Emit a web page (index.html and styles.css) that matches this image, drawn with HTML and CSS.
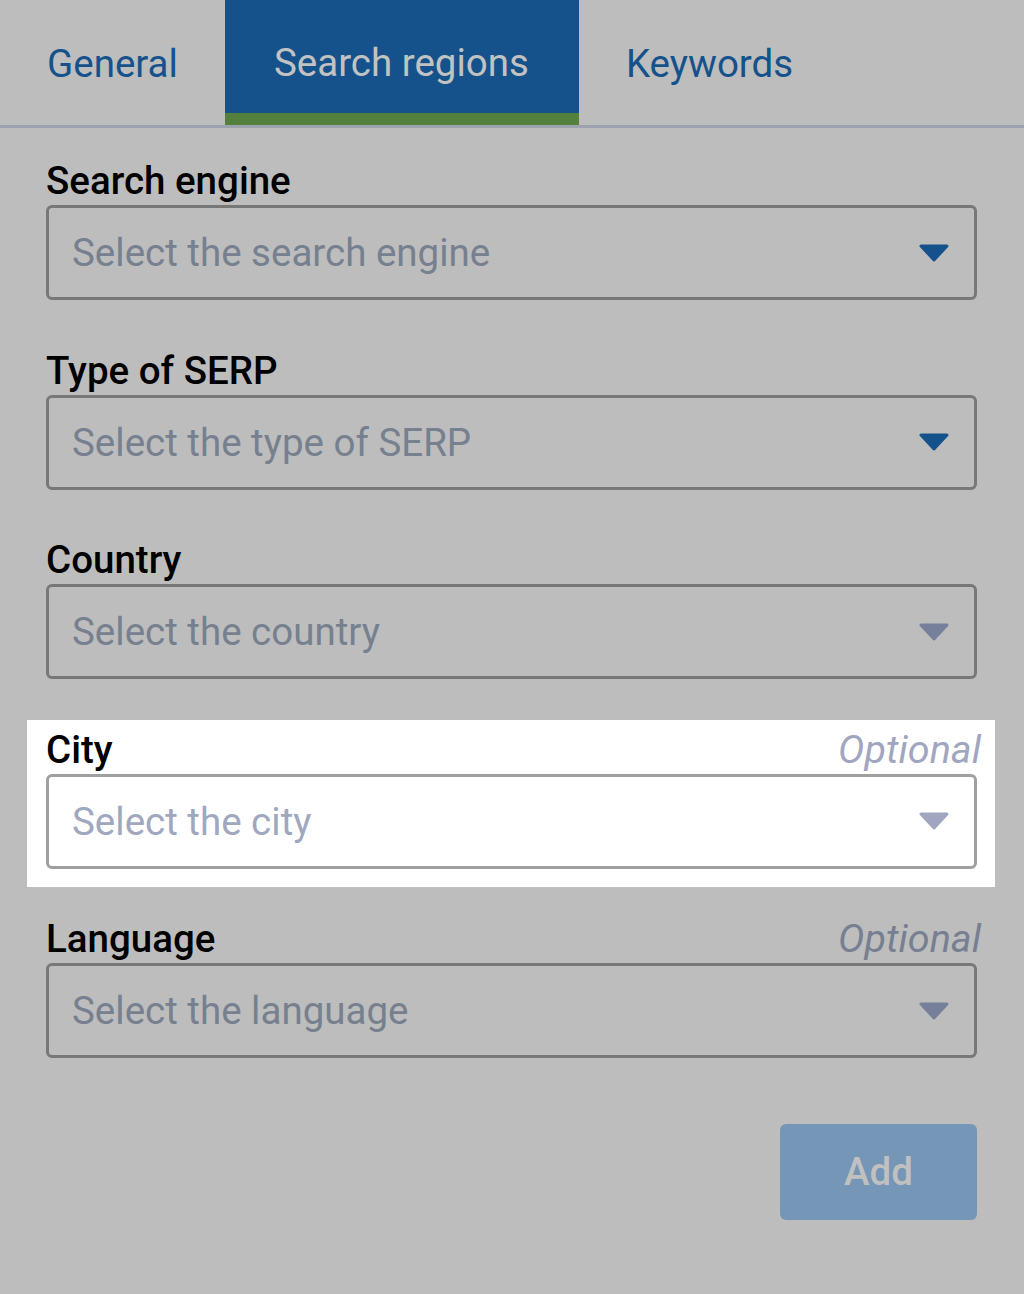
FILE: index.html
```html
<!DOCTYPE html>
<html lang="en">
<head>
<meta charset="utf-8">
<title>Search regions</title>
<link rel="stylesheet" href="styles.css">
</head>
<body>
<div class="page">
  <nav class="tabs">
    <div class="tab">General</div>
    <div class="tab tab-active">Search regions</div>
    <div class="tab">Keywords</div>
  </nav>
  <main class="form">
    <div class="field">
      <div class="label-row"><span class="label">Search engine</span></div>
      <div class="select">
        <span class="placeholder">Select the search engine</span>
        <svg class="arrow arrow-blue" width="30" height="18" viewBox="0 0 30 18"><polygon points="2,2 28,2 15,16" /></svg>
      </div>
    </div>
    <div class="field">
      <div class="label-row"><span class="label">Type of SERP</span></div>
      <div class="select">
        <span class="placeholder">Select the type of SERP</span>
        <svg class="arrow arrow-blue" width="30" height="18" viewBox="0 0 30 18"><polygon points="2,2 28,2 15,16" /></svg>
      </div>
    </div>
    <div class="field">
      <div class="label-row"><span class="label">Country</span></div>
      <div class="select">
        <span class="placeholder">Select the country</span>
        <svg class="arrow" width="30" height="18" viewBox="0 0 30 18"><polygon points="2,2 28,2 15,16" /></svg>
      </div>
    </div>
    <div class="field field-focus">
      <div class="label-row"><span class="label">City</span><span class="optional">Optional</span></div>
      <div class="select">
        <span class="placeholder">Select the city</span>
        <svg class="arrow" width="30" height="18" viewBox="0 0 30 18"><polygon points="2,2 28,2 15,16" /></svg>
      </div>
    </div>
    <div class="field">
      <div class="label-row"><span class="label">Language</span><span class="optional">Optional</span></div>
      <div class="select">
        <span class="placeholder">Select the language</span>
        <svg class="arrow" width="30" height="18" viewBox="0 0 30 18"><polygon points="2,2 28,2 15,16" /></svg>
      </div>
    </div>
    <div class="actions">
      <button class="btn-add" type="button">Add</button>
    </div>
  </main>
</div>
</body>
</html>
```

FILE: styles.css
```css
* { box-sizing: border-box; }
html, body { margin: 0; padding: 0; }
body {
  background: #bdbdbd;
  font-family: Roboto, "Noto Sans", "Liberation Sans", sans-serif;
  width: 1024px;
  height: 1294px;
  overflow: hidden;
}
.tabs {
  display: flex;
  height: 128px;
  border-bottom: 3px solid #9ca2ae;
}
.tab {
  height: 125px;
  padding: 3px 47px 0 47px;
  display: flex;
  align-items: center;
  font-size: 38.5px;
  color: #15528b;
  line-height: 1;
}
.tab-active {
  background: #15528b;
  color: #c2c2c2;
  border-bottom: 12px solid #53803d;
  padding: 14px 50px 0 49px;
}
.form {
  padding: 30px 47px 0 46px;
}
.field {
  margin-bottom: 47.5px;
  position: relative;
}
.field-focus {
  background: #ffffff;
  margin: -7px -18px 29.5px -19px;
  padding: 7px 18px 18px 19px;
}
.label-row {
  display: flex;
  justify-content: space-between;
  align-items: baseline;
  height: 42px;
  line-height: 46px;
  margin-bottom: 5px;
}
.label {
  font-size: 38.5px;
  font-weight: 500;
  color: #000;
}
.optional {
  font-size: 39.5px;
  font-style: italic;
  color: #777f92;
  margin-right: -4px;
}
.field-focus .optional { color: #a0a6bf; }
.select {
  height: 95px;
  border: 3px solid #787878;
  border-radius: 6px;
  display: flex;
  align-items: center;
  justify-content: space-between;
  padding: 0 25px 0 23px;
}
.field-focus .select { border-color: #a0a0a0; }
.placeholder {
  font-size: 38.5px;
  color: #76808f;
}
.field-focus .placeholder { color: #a0a8bf; }
.arrow { display: block; }
.arrow polygon {
  fill: #76809a;
  stroke: #76809a;
  stroke-width: 3;
  stroke-linejoin: round;
}
.field-focus .arrow polygon { fill: #a0a6bf; stroke: #a0a6bf; }
.arrow-blue polygon { fill: #15528b; stroke: #15528b; }
.actions {
  display: flex;
  justify-content: flex-end;
  padding-top: 18px;
}
.btn-add {
  width: 197px;
  height: 96px;
  border: 0;
  border-radius: 6px;
  background: #7596b7;
  color: #c0c0c0;
  font-family: Roboto, "Noto Sans", sans-serif;
  font-size: 38.5px;
  font-weight: 500;
}
```
